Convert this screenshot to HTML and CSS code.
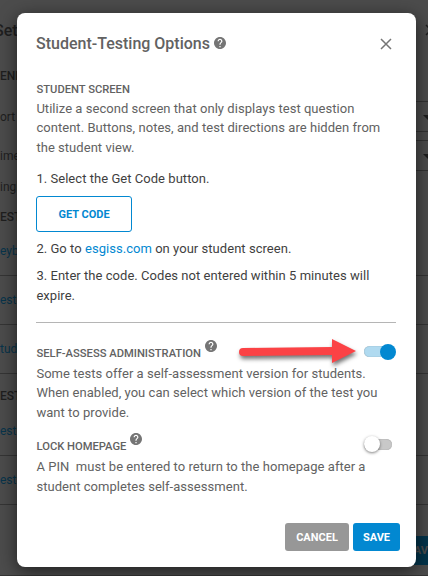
FILE: index.html
```
<!DOCTYPE html>
<html>
    <head>
        <meta charset="utf-8">
        <title>Student-Testing Options</title>
        <link rel="stylesheet" href="styles.css">
    </head>
    <body>
        <div class="page">
            <div class="row top"><span>Set</span><svg class="pageClose" width="12" height="12" viewBox="0 0 12 12"><path d="M1 1L11 11M11 1L1 11"/></svg></div>
            <div class="row heading general">ENE</div>
            <div class="row field first"><span>ort S</span><div class="select"></div></div>
            <div class="row field"><span>ime</span><div class="select"></div></div>
            <div class="row single">ingl</div>
            <div class="row heading keyboard">EST</div>
            <div class="row link short">eyb</div>
            <div class="row link">est</div>
            <div class="row link">tude</div>
            <div class="row heading tests">EST</div>
            <div class="row link short">est</div>
            <div class="row link">est</div>
            <div class="pageFooter"><div class="pageSave">SAVE</div></div>
        </div>

        <div class="modal">
            <div class="title">
                <h1>Student-Testing Options</h1>
                <svg class="help" viewBox="2 2 20 20"><path d="M12 2C6.48 2 2 6.48 2 12s4.480 10 10 10 10-4.480 10-10S17.520 2 12 2zm1 17h-2v-2h2v2zm2.070-7.750l-.9.920C13.450 12.900 13 13.500 13 15h-2v-.5c0-1.100.450-2.100 1.170-2.830l1.240-1.260c.370-.360.590-.860.590-1.410 0-1.100-.9-2-2-2s-2 .9-2 2H8c0-2.210 1.790-4 4-4s4 1.790 4 4c0 .880-.360 1.680-.930 2.250z"/></svg>
                <svg class="close" width="12" height="12" viewBox="0 0 12 12"><path d="M1 1L11 11M11 1L1 11"/></svg>
            </div>

            <h2>STUDENT SCREEN</h2>
            <p>Utilize a second screen that only displays test question<br>content. Buttons, notes, and test directions are hidden from<br>the student view.</p>
            <p class="step">1. Select the Get Code button.</p>
            <button class="getCode">GET CODE</button>
            <p class="step two">2. Go to <a>esgiss.com</a> on your student screen.</p>
            <p class="step three">3. Enter the code. Codes not entered within 5 minutes will<br>expire.</p>
            <hr>

            <div class="option">
                <h2>SELF-ASSESS ADMINISTRATION</h2>
                <svg class="help raised" viewBox="2 2 20 20"><path d="M12 2C6.48 2 2 6.48 2 12s4.480 10 10 10 10-4.480 10-10S17.520 2 12 2zm1 17h-2v-2h2v2zm2.070-7.750l-.9.920C13.450 12.900 13 13.500 13 15h-2v-.5c0-1.100.450-2.100 1.170-2.830l1.240-1.260c.370-.360.590-.860.590-1.410 0-1.100-.9-2-2-2s-2 .9-2 2H8c0-2.210 1.790-4 4-4s4 1.790 4 4c0 .880-.360 1.680-.930 2.250z"/></svg>
                <div class="toggle on"></div>
                <svg class="arrow" width="126" height="36" viewBox="0 0 126 36"><path d="M5 10L94 9V1L118 13L94 25V17L5 18A4 4 0 0 1 5 10Z"/></svg>
            </div>
            <p>Some tests offer a self-assessment version for students.<br>When enabled, you can select which version of the test you<br>want to provide.</p>

            <div class="option lock">
                <h2>LOCK HOMEPAGE</h2>
                <svg class="help raised" viewBox="2 2 20 20"><path d="M12 2C6.48 2 2 6.48 2 12s4.480 10 10 10 10-4.480 10-10S17.520 2 12 2zm1 17h-2v-2h2v2zm2.070-7.750l-.9.920C13.450 12.900 13 13.500 13 15h-2v-.5c0-1.100.450-2.100 1.170-2.830l1.240-1.260c.370-.360.590-.860.590-1.410 0-1.100-.9-2-2-2s-2 .9-2 2H8c0-2.210 1.790-4 4-4s4 1.790 4 4c0 .880-.360 1.680-.930 2.250z"/></svg>
                <div class="toggle"></div>
            </div>
            <p>A PIN&nbsp; must be entered to return to the homepage after a<br>student completes self-assessment.</p>

            <div class="buttons">
                <button class="cancel">CANCEL</button>
                <button class="save">SAVE</button>
            </div>
        </div>
    </body>
</html>
```
FILE: styles.css
```
* { box-sizing: border-box; }
body {
    margin: 0;
    height: 576px;
    overflow: hidden;
    position: relative;
    background: #4c4c4c;
    font-family: Roboto, sans-serif;
}
h1, h2, p { margin: 0; }

/* dimmed settings page behind the dialog */
.page {
    height: 576px;
    overflow: hidden;
    font-size: 12px;
    color: #1f1f1f;
    border-bottom: 1px solid #353535;
}
.row {
    display: flex;
    justify-content: space-between;
    align-items: center;
    height: 30px;
    white-space: nowrap;
}
.top {
    height: 60px;
    font-size: 16px;
    font-weight: 500;
    margin-left: -6px;
}
.pageClose {
    fill: none;
    stroke: #1f1f1f;
    stroke-width: 1.5;
    margin-right: -9px;
}
.heading {
    font-weight: 500;
}
.general {
    height: 32px;
}
.field {
    height: 39px;
}
.first { margin-top: 5px; }
.select {
    width: 60px;
    height: 31px;
    margin-right: -20px;
    border: 1px solid #333;
    padding: 13px 0 0 34px;
}
.select::after {
    content: "";
    display: block;
    width: 10px;
    border: 5px solid transparent;
    border-top-color: #1f1f1f;
    border-bottom: 0;
}
.single { height: 24px; }
.link {
    height: 49px;
    border-bottom: 1px solid #353535;
    color: #08344b;
}
.keyboard { height: 32px; padding-top: 4px; }
.short { height: 45px; padding-bottom: 4px; }
.tests { height: 37px; padding-top: 7px; }
.pageFooter {
    display: flex;
    justify-content: flex-end;
    padding-top: 31px;
}
.pageSave {
    width: 47px;
    height: 29px;
    margin-right: -19px;
    background: #03344b;
    color: #4c4c4c;
    font-weight: 700;
    line-height: 29px;
    font-size: 11px;
    padding-left: 7px;
}

.modal {
    position: absolute;
    left: 17px;
    top: 13px;
    width: 399px;
    height: 554px;
    padding: 0 20px 0 19px;
    border-radius: 8px;
    background: #fff;
    box-shadow: 0 4px 18px rgba(0, 0, 0, 0.6);
    color: #626262;
}
.title {
    display: flex;
    align-items: center;
    height: 60px;
}
h1 {
    font-size: 16px;
    font-weight: 500;
}
h2 {
    font-size: 11.2px;
    font-weight: 500;
    line-height: 18px;
    white-space: nowrap;
    text-indent: 0.5px;
}
.modal > h2 { margin-top: 7.5px; }
p {
    font-size: 13px;
    line-height: 19.5px;
    letter-spacing: 0.04px;
    white-space: nowrap;
    padding-left: 0.4px;
}
.help {
    width: 12px;
    height: 12px;
    margin-left: 4px;
    fill: #757575;
}
.close {
    margin: 1px 4px 0 auto;
    fill: none;
    stroke: #757575;
    stroke-width: 1.5;
}
.step {
    color: #3f3f3f;
    margin-top: 11.5px;
}
.two { margin-top: 7px; }
.three { margin-top: 7.5px; }
a { color: #0288d1; }
button {
    display: block;
    border: 0;
    border-radius: 3px;
    padding: 0;
    font-family: Roboto, sans-serif;
    font-size: 11px;
    font-weight: 700;
    color: #fff;
}
.getCode {
    width: 96px;
    height: 36px;
    margin-top: 8px;
    border: 1px solid #0288d1;
    background: #fff;
    color: #0288d1;
}
hr {
    margin: 16.5px 0 0;
    border: 0;
    border-top: 1px solid #b5b5b5;
}
.option {
    display: flex;
    position: relative;
    height: 19px;
    margin-top: 22px;
}
.lock { margin-top: 16px; }
.raised { margin-top: -5px; }
.toggle {
    width: 28px;
    height: 11px;
    margin: 1px 4px 0 auto;
    border-radius: 6px;
    background: #c8c8c8;
    box-shadow: inset 0 0 1px rgba(0, 0, 0, 0.4);
    position: relative;
}
.toggle::after {
    content: "";
    position: absolute;
    left: 0;
    top: -3px;
    width: 16px;
    height: 16px;
    border-radius: 50%;
    background: #fff;
    box-shadow: 0 1px 3px rgba(0, 0, 0, 0.5);
}
.on { background: #b0daf0; }
.on::after {
    left: 16px;
    top: -2px;
    background: #0288d1;
    box-shadow: none;
}
.arrow {
    position: absolute;
    left: 202px;
    top: -7px;
    fill: #fb4245;
    filter: drop-shadow(1px 3px 2px rgba(0, 0, 0, 0.55));
}
.buttons {
    display: flex;
    justify-content: flex-end;
    gap: 4px;
    margin: 27px -4px 0 0;
}
.cancel {
    width: 64px;
    height: 28px;
    background: #979797;
}
.save {
    width: 47px;
    height: 28px;
    background: #0288d1;
}
```
